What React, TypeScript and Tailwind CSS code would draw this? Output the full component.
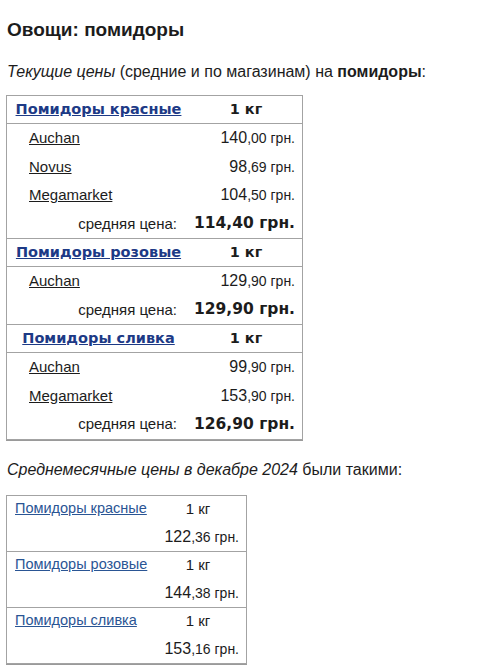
import React from "react";

interface Shop {
  name: string;
  whole: string;
  cents: string;
}

interface Group {
  title: string;
  shops: Shop[];
  avg: string;
}

const groups: Group[] = [
  {
    title: "Помидоры красные",
    shops: [
      { name: "Auchan", whole: "140", cents: ",00" },
      { name: "Novus", whole: "98", cents: ",69" },
      { name: "Megamarket", whole: "104", cents: ",50" },
    ],
    avg: "114,40 грн.",
  },
  {
    title: "Помидоры розовые",
    shops: [{ name: "Auchan", whole: "129", cents: ",90" }],
    avg: "129,90 грн.",
  },
  {
    title: "Помидоры сливка",
    shops: [
      { name: "Auchan", whole: "99", cents: ",90" },
      { name: "Megamarket", whole: "153", cents: ",90" },
    ],
    avg: "126,90 грн.",
  },
];

const monthly = [
  { title: "Помидоры красные", whole: "122", cents: ",36" },
  { title: "Помидоры розовые", whole: "144", cents: ",38" },
  { title: "Помидоры сливка", whole: "153", cents: ",16" },
];

const Price: React.FC<{ whole: string; cents: string }> = ({ whole, cents }) => (
  <span className="whitespace-nowrap">
    <span className="text-[16px]">{whole}</span>
    <span className="text-[14px]">{cents} грн.</span>
  </span>
);

const App: React.FC = () => {
  return (
    <div className="min-h-[665px] bg-white px-[6px] pt-[19px] font-['Liberation_Sans',Arial,sans-serif] text-[#1c1c1c]">
      <h1 className="pl-px text-[19px] font-bold leading-[22px]">Овощи: помидоры</h1>
      <p className="mt-[21px] pl-px text-[16px] leading-[20px]">
        <i>Текущие цены</i> (средние и по магазинам) на <b>помидоры</b>:
      </p>

      <div className="mt-[13px] w-[297px] border border-[#a3a3a3] shadow-[0_1px_0_#9a9a9a]">
        {groups.map((group, gi) => (
          <div key={group.title} className={gi > 0 ? "border-t border-[#a3a3a3]" : ""}>
            <div className="flex h-[28px] items-center border-b border-[#a3a3a3] font-['DejaVu_Sans',Verdana,sans-serif] text-[14.5px] font-bold">
              <div className="w-[183px] text-center">
                <a className="text-[#1d3a86] underline">{group.title}</a>
              </div>
              <div className="flex-1 text-center">1 кг</div>
            </div>
            {group.shops.map((shop) => (
              <div
                key={shop.name}
                className="flex h-[28.5px] items-center justify-between pl-[22px] pr-[7px] text-[15px]"
              >
                <a className="text-[#1c1c1c] underline">{shop.name}</a>
                <Price whole={shop.whole} cents={shop.cents} />
              </div>
            ))}
            <div className="flex h-[28.5px] items-center">
              <div className="w-[183px] pr-[13px] text-right text-[15px]">средняя цена:</div>
              <div className="flex-1 pr-[7px] text-right font-['DejaVu_Sans',Verdana,sans-serif] text-[15.5px] font-bold">
                {group.avg}
              </div>
            </div>
          </div>
        ))}
      </div>

      <p className="mt-[20px] pl-px text-[16px] leading-[20px]">
        <i>Среднемесячные цены в декабре 2024</i> были такими:
      </p>

      <div className="mt-[15px] w-[241px] border border-[#a3a3a3] shadow-[0_1px_0_#9a9a9a]">
        {monthly.map((row, i) => (
          <div key={row.title} className={i > 0 ? "border-t border-[#a3a3a3]" : ""}>
            <div className="flex h-[27.5px] items-center text-[14.5px]">
              <div className="flex-1 whitespace-nowrap pl-[8px]">
                <a className="text-[#2a5594] underline">{row.title}</a>
              </div>
              <div className="w-[96px] text-center text-[15px]">1 кг</div>
            </div>
            <div className="flex h-[27.5px] items-center justify-end pr-[7px]">
              <Price whole={row.whole} cents={row.cents} />
            </div>
          </div>
        ))}
      </div>
    </div>
  );
};

export default App;
